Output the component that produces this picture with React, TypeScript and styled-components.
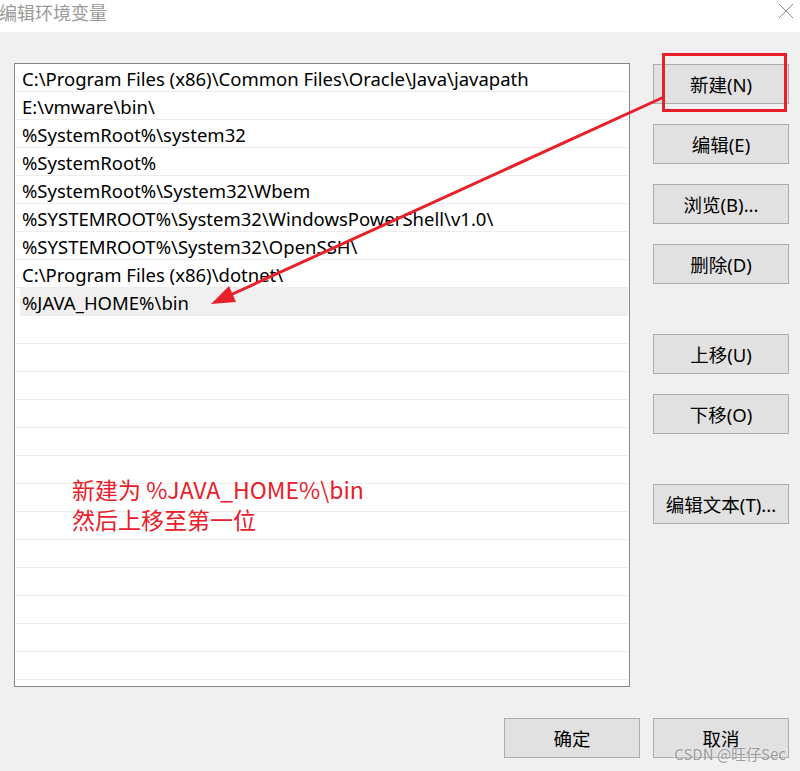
import React from "react";
import styled, { createGlobalStyle } from "styled-components";

const Global = createGlobalStyle`
  html, body { margin: 0; padding: 0; background: #f0f0f0; }
  body { font-family: "Noto Sans", "Noto Sans CJK SC", sans-serif; }
`;

const Window = styled.div`
  position: relative;
  width: 800px;
  height: 771px;
  background: #f0f0f0;
  overflow: hidden;
  display: flex;
  flex-direction: column;
`;

const TitleBar = styled.div`
  height: 32px;
  background: #ffffff;
  display: flex;
  align-items: center;
  justify-content: space-between;
  flex-shrink: 0;
`;

const Title = styled.span`
  margin-left: -1px;
  margin-top: -9px;
  font-family: "Noto Sans CJK SC", sans-serif;
  font-size: 18px;
  color: #9a9a9a;
`;

const CloseBox = styled.div`
  width: 16px;
  height: 16px;
  margin-right: 6px;
  margin-top: -10px;
  display: flex;
`;

const Body = styled.div`
  flex: 1;
  display: flex;
  flex-direction: column;
  padding: 31px 11px 0 14px;
`;

const Main = styled.div`
  display: flex;
  gap: 23px;
`;

const ListBox = styled.div`
  width: 616px;
  height: 624px;
  box-sizing: border-box;
  border: 1px solid #828790;
  background: #ffffff;
  display: flex;
  flex-direction: column;
  overflow: hidden;
`;

const Row = styled.div<{ $selected?: boolean }>`
  height: 28px;
  flex-shrink: 0;
  box-sizing: border-box;
  border-bottom: 1px solid #ececec;
  margin-right: 1px;
  display: flex;
  align-items: center;
  padding-left: ${(p) => (p.$selected ? "2px" : "7px")};
  padding-top: 2px;
  margin-left: ${(p) => (p.$selected ? "5px" : "0")};
  background: ${(p) => (p.$selected ? "#f0f0f0" : "#ffffff")};
  font-family: "Noto Sans", "Noto Sans CJK SC", sans-serif;
  font-size: 18.5px;
  color: #000000;
  white-space: nowrap;
`;

const ButtonColumn = styled.div`
  display: flex;
  flex-direction: column;
  padding-top: 1px;
`;

const Button = styled.div<{ $gap?: number }>`
  width: 136px;
  height: 40px;
  box-sizing: border-box;
  margin-top: ${(p) => p.$gap ?? 0}px;
  background: #e1e1e1;
  border: 1px solid #adadad;
  display: flex;
  align-items: center;
  justify-content: center;
  font-family: "Noto Sans", "Noto Sans CJK SC", sans-serif;
  font-size: 18.5px;
  color: #000000;
`;

const Footer = styled.div`
  display: flex;
  justify-content: flex-end;
  gap: 13px;
  margin-top: 31px;
`;

const Overlay = styled.svg`
  position: absolute;
  left: 0;
  top: 0;
  pointer-events: none;
`;

const Note = styled.div`
  position: absolute;
  left: 72px;
  top: 474px;
  font-family: "Noto Sans CJK SC", sans-serif;
  font-size: 23px;
  line-height: 30px;
  color: #e8202a;
`;

const Watermark = styled.div`
  position: absolute;
  right: 14px;
  bottom: 7px;
  font-family: "Noto Sans CJK SC", sans-serif;
  font-size: 15px;
  color: rgba(130, 130, 130, 0.8);
  text-shadow: 0 0 2px rgba(255, 255, 255, 0.9);
`;

const paths = [
  "C:\\Program Files (x86)\\Common Files\\Oracle\\Java\\javapath",
  "E:\\vmware\\bin\\",
  "%SystemRoot%\\system32",
  "%SystemRoot%",
  "%SystemRoot%\\System32\\Wbem",
  "%SYSTEMROOT%\\System32\\WindowsPowerShell\\v1.0\\",
  "%SYSTEMROOT%\\System32\\OpenSSH\\",
  "C:\\Program Files (x86)\\dotnet\\",
  "%JAVA_HOME%\\bin",
];

export default function App() {
  const rows = [...paths];
  while (rows.length < 23) rows.push("");
  return (
    <Window>
      <Global />
      <TitleBar>
        <Title>编辑环境变量</Title>
        <CloseBox>
          <svg width="16" height="16" viewBox="0 0 16 16">
            <path d="M1 1 L15 15 M15 1 L1 15" stroke="#8a8a8a" strokeWidth="1" />
          </svg>
        </CloseBox>
      </TitleBar>
      <Body>
        <Main>
          <ListBox>
            {rows.map((r, i) => (
              <Row key={i} $selected={i === 8}>
                {r}
              </Row>
            ))}
          </ListBox>
          <ButtonColumn>
            <Button>新建(N)</Button>
            <Button $gap={20}>编辑(E)</Button>
            <Button $gap={20}>浏览(B)...</Button>
            <Button $gap={20}>删除(D)</Button>
            <Button $gap={50}>上移(U)</Button>
            <Button $gap={20}>下移(O)</Button>
            <Button $gap={50}>编辑文本(T)...</Button>
          </ButtonColumn>
        </Main>
        <Footer>
          <Button>确定</Button>
          <Button>取消</Button>
        </Footer>
      </Body>
      <Overlay width="800" height="771" viewBox="0 0 800 771">
        <rect x="663.5" y="54.5" width="122" height="56" fill="none" stroke="#e8202a" strokeWidth="3" />
        <line x1="664" y1="97" x2="226" y2="297" stroke="#e8202a" strokeWidth="3" />
        <polygon points="211,304 229,286 236,302" fill="#e8202a" />
      </Overlay>
      <Note>
        新建为 %JAVA_HOME%\bin
        <br />
        然后上移至第一位
      </Note>
      <Watermark>CSDN @旺仔Sec</Watermark>
    </Window>
  );
}
